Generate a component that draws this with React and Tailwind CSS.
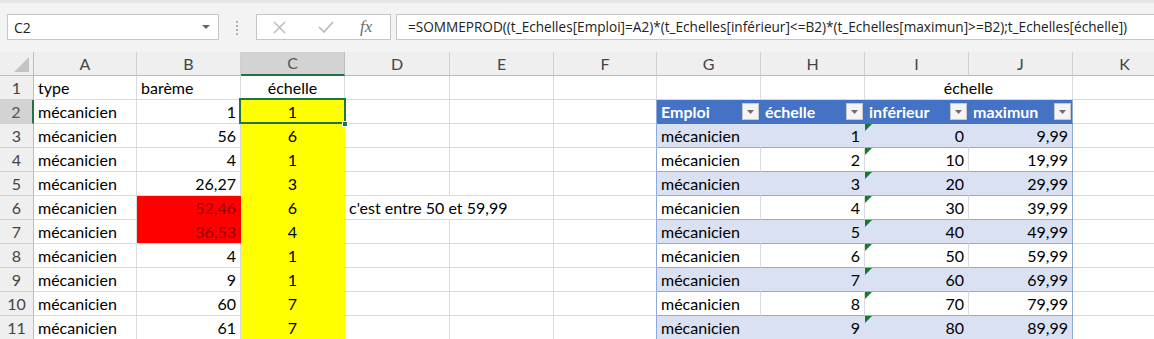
import React from "react";

const COLS = ["A", "B", "C", "D", "E", "F", "G", "H", "I", "J", "K"];
const B_VALUES = ["1", "56", "4", "26,27", "52,46", "36,53", "4", "9", "60", "61"];
const C_VALUES = ["1", "6", "1", "3", "6", "4", "1", "1", "7", "7"];
const TABLE_HEAD = ["Emploi", "échelle", "inférieur", "maximun"];

const font = { fontFamily: "Lato, 'Open Sans', sans-serif" };

const getCell = (r, c) => {
  // returns { text, align, bg, border-right color, border-bottom color, etc. }
  const cell = { text: "", align: "left", bg: "", br: "border-r-[#dadada]", bb: "border-b-[#dadada]", color: "text-black" };

  if (r === 1) {
    if (c === "A") cell.text = "type";
    if (c === "B") cell.text = "barème";
    if (c === "C") {
      cell.text = "échelle";
      cell.align = "center";
    }
    if (c === "I") cell.br = "border-r-transparent";
    if (c === "J") {
      cell.text = "échelle";
      cell.merged = true;
    }
    return cell;
  }

  const i = r - 2;
  if (c === "A") cell.text = "mécanicien";
  if (c === "B") {
    cell.text = B_VALUES[i];
    cell.align = "right";
    if (r === 6 || r === 7) {
      cell.bg = "bg-[#ff0000]";
      cell.color = "text-[#960000]";
      cell.br = "border-r-[#ff0000]";
      if (r === 6) cell.bb = "border-b-[#ff0000]";
    }
  }
  if (c === "C") {
    cell.text = C_VALUES[i];
    cell.align = "center";
    cell.bg = "bg-[#ffff00]";
    cell.br = "border-r-[#ffff00]";
    if (r < 11) cell.bb = "border-b-[#ffff00]";
  }
  if (c === "D" && r === 6) {
    cell.text = "c'est entre 50 et 59,99";
    cell.br = "border-r-transparent";
  }
  if (c === "F") cell.br = "border-r-[#8ea9db]";

  if (["G", "H", "I", "J"].includes(c)) {
    const k = ["G", "H", "I", "J"].indexOf(c);
    cell.bb = "border-b-[#8ea9db]";
    if (r === 2) {
      cell.text = TABLE_HEAD[k];
      cell.head = true;
      cell.bg = "bg-[#4472c4]";
      cell.color = "text-white";
      cell.br = c === "J" ? "border-r-[#8ea9db]" : "border-r-[#4472c4]";
      cell.bb = "border-b-[#4472c4]";
    } else {
      const n = r - 3;
      const banded = r % 2 === 1;
      if (banded) {
        cell.bg = "bg-[#d9e1f2]";
        cell.br = "border-r-[#d9e1f2]";
      }
      if (c === "J") cell.br = "border-r-[#8ea9db]";
      if (c === "G") cell.text = "mécanicien";
      if (c === "H") {
        cell.text = String(n + 1);
        cell.align = "right";
      }
      if (c === "I") {
        cell.text = String(n * 10);
        cell.align = "right";
        cell.flag = true;
      }
      if (c === "J") {
        cell.text = `${n * 10 + 9},99`;
        cell.align = "right";
      }
    }
  }
  return cell;
};

const alignClass = { left: "justify-start", right: "justify-end", center: "justify-center" };

const FilterButton = () => (
  <div className="absolute right-[1px] top-[3px] w-[17px] h-[17px] bg-[#f4f4f4] border border-[#c8c8c8] flex items-center justify-center">
    <svg width="7" height="4" viewBox="0 0 7 4">
      <polygon points="0,0 7,0 3.5,4" fill="#6d6d6d" />
    </svg>
  </div>
);

const Cell = ({ r, c }) => {
  const cell = getCell(r, c);
  const selected = r === 2 && c === "C";
  return (
    <div
      className={`relative flex items-center px-[4px] whitespace-nowrap border-r border-b ${cell.br} ${cell.bb} ${cell.bg} ${cell.color} ${alignClass[cell.align]} ${cell.head ? "font-bold" : ""} ${selected ? "z-10" : ""}`}
    >
      {cell.merged ? (
        <span className="absolute left-[-104px] right-0 text-center">{cell.text}</span>
      ) : (
        <span className={cell.head ? "pr-[18px]" : ""}>{cell.text}</span>
      )}
      {cell.head && <FilterButton />}
      {cell.flag && (
        <svg className="absolute left-0 top-0" width="7" height="7" viewBox="0 0 7 7">
          <polygon points="0,0 7,0 0,7" fill="#167a30" />
        </svg>
      )}
      {selected && (
        <>
          <div className="absolute left-[-2px] top-[-2px] right-[-2px] bottom-[-1px] border-2 border-[#217346]" />
          <div className="absolute right-[-4px] bottom-[-4px] w-[6px] h-[6px] bg-[#217346] border border-white" />
        </>
      )}
    </div>
  );
};

const TopBar = () => (
  <div className="h-[52px] bg-[#f3f3f3] border-t-[3px] border-[#e6e6e6] flex items-start pt-[11px]">
    <div className="ml-[7px] w-[212px] h-[26px] bg-white border border-[#c6c6c6] flex items-center justify-between pl-[6px] pr-[8px] text-[14px] text-[#222]" style={{ fontFamily: "'Open Sans', sans-serif" }}>
      <span>C2</span>
      <svg width="8" height="4" viewBox="0 0 8 4">
        <polygon points="0,0 8,0 4,4" fill="#666" />
      </svg>
    </div>
    <div className="ml-[17px] mt-[7px] flex flex-col gap-[2px]">
      <div className="w-[2px] h-[2px] bg-[#b0b0b0]" />
      <div className="w-[2px] h-[2px] bg-[#b0b0b0]" />
      <div className="w-[2px] h-[2px] bg-[#b0b0b0]" />
      <div className="w-[2px] h-[2px] bg-[#b0b0b0]" />
    </div>
    <div className="ml-[18px] w-[135px] h-[26px] bg-white border border-[#c6c6c6] flex items-center">
      <svg className="ml-[16px]" width="13" height="13" viewBox="0 0 13 13">
        <path d="M1 1 L12 12 M12 1 L1 12" stroke="#b8b8b8" strokeWidth="1.4" fill="none" />
      </svg>
      <svg className="ml-[32px]" width="16" height="12" viewBox="0 0 16 12">
        <path d="M1 6 L6 11 L15 1" stroke="#b8b8b8" strokeWidth="1.6" fill="none" />
      </svg>
      <span className="ml-[26px] text-[17px] italic text-[#6d6d6d]" style={{ fontFamily: "'Liberation Serif', serif" }}>
        fx
      </span>
    </div>
    <div className="ml-[5px] flex-1 h-[26px] bg-white border border-r-0 border-[#c6c6c6] flex items-center pl-[11px] text-[13.6px] text-[#222] whitespace-nowrap overflow-hidden" style={{ fontFamily: "'Open Sans', sans-serif" }}>
      =SOMMEPROD((t_Echelles[Emploi]=A2)*(t_Echelles[inférieur]&lt;=B2)*(t_Echelles[maximun]&gt;=B2);t_Echelles[échelle])
    </div>
  </div>
);

const App = () => {
  const rows = Array.from({ length: 11 }, (_, i) => i + 1);
  return (
    <div className="w-[1154px] h-[339px] overflow-hidden bg-white" style={font}>
      <TopBar />
      <div className="grid grid-cols-[34px_103px_104px_104px_105px_104px_103px_104px_104px_104px_104px_104px] auto-rows-[24px] text-[16px]">
        <div className="relative bg-[#efefef] border-r border-b border-[#bdbdbd]">
          <svg className="absolute right-[4px] bottom-[3px]" width="15" height="15" viewBox="0 0 15 15">
            <polygon points="15,0 15,15 0,15" fill="#c3c3c3" />
          </svg>
        </div>
        {COLS.map((c) =>
          c === "C" ? (
            <div key={c} className="flex items-center justify-center bg-[#d3d3d3] border-r border-r-[#bdbdbd] border-b-2 border-b-[#217346] text-[#555]">
              {c}
            </div>
          ) : (
            <div key={c} className="flex items-center justify-center bg-[#efefef] border-r border-r-[#d0d0d0] border-b border-b-[#bdbdbd] text-[#444]">
              {c}
            </div>
          )
        )}
        {rows.map((r) => (
          <React.Fragment key={r}>
            {r === 2 ? (
              <div className="flex items-center justify-center bg-[#d3d3d3] border-r-2 border-r-[#217346] border-b border-b-[#d0d0d0] text-[#555]">
                {r}
              </div>
            ) : (
              <div className="flex items-center justify-center bg-[#efefef] border-r border-r-[#bdbdbd] border-b border-b-[#d0d0d0] text-[#444]">
                {r}
              </div>
            )}
            {COLS.map((c) => (
              <Cell key={c} r={r} c={c} />
            ))}
          </React.Fragment>
        ))}
      </div>
    </div>
  );
};

export default App;
